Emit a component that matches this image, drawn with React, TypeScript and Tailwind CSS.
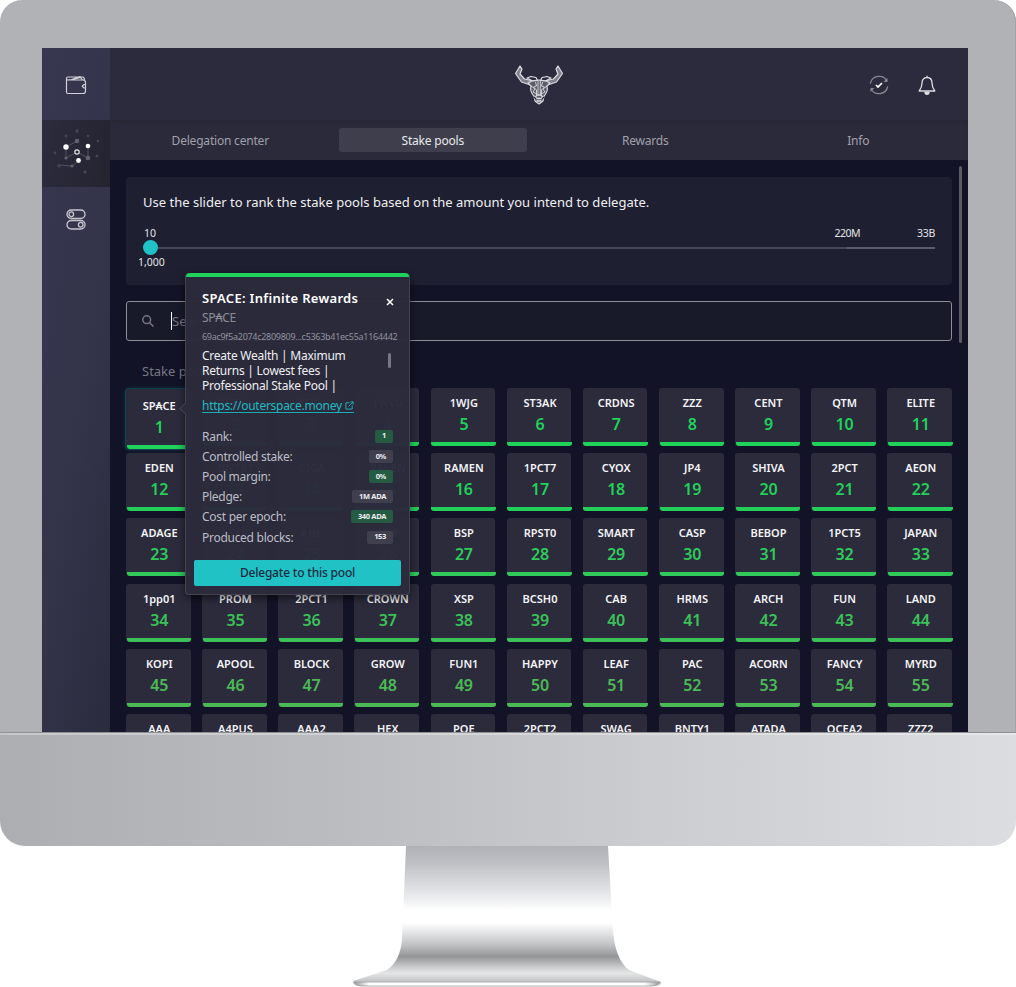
import React from "react";

const rows: string[][] = [
  ["SP₳CE", "OCEAN", "PEGA", "1WVG", "1WJG", "ST3AK", "CRDNS", "ZZZ", "CENT", "QTM", "ELITE"],
  ["EDEN", "UNTRT", "GIGA", "RAVEN", "RAMEN", "1PCT7", "CYOX", "JP4", "SHIVA", "2PCT", "AEON"],
  ["ADAGE", "STAR", "AHL", "TOP", "BSP", "RPST0", "SMART", "CASP", "BEBOP", "1PCT5", "JAPAN"],
  ["1pp01", "PROM", "2PCT1", "CROWN", "XSP", "BCSH0", "CAB", "HRMS", "ARCH", "FUN", "LAND"],
  ["KOPI", "APOOL", "BLOCK", "GROW", "FUN1", "HAPPY", "LEAF", "PAC", "ACORN", "FANCY", "MYRD"],
  ["AAA", "A4PUS", "AAA2", "HEX", "POE", "2PCT2", "SWAG", "BNTY1", "ATADA", "OCEA2", "ZZZ2"],
];
const rankColors = ["#1fd25a", "#24cf59", "#2fca5a", "#3cc158", "#4bb955", "#55b455"];

function Tile({ name, rank, row }: { name: string; rank: number; row: number }) {
  const color = rankColors[row];
  const selected = rank === 1;
  return (
    <div className={selected ? "pt-px" : ""}>
      <div
        className={
          "flex flex-col items-center rounded-[3px] bg-[#2b2b3c] " +
          (selected ? "h-[60px] pt-[2px] shadow-[0_0_0_1px_#12414f,0_0_5px_#12414f]" : "h-[58px]")
        }
      >
        <div className="mt-[6px] ml-[2px] h-[18px] text-[11px] leading-[18px] font-semibold whitespace-nowrap text-[#f4f4f6]">{name}</div>
        <div className="ml-[2px] h-[22px] text-[16px] leading-[24px] font-semibold tracking-[-0.2px]" style={{ color }}>{rank}</div>
        <div className="mt-auto ml-px h-[4px] w-full rounded-b-[3px]" style={{ background: color }} />
      </div>
    </div>
  );
}

function Bull() {
  return (
    <svg className="h-[40px] w-[50px]" viewBox="0 0 50 40" fill="none" stroke="#dcdce2" strokeWidth="1.2" strokeLinejoin="round">
      <path d="M6 1 1.500 8.500l6 8.500 9 3 3-4-9-2L6 9l2-5zM44 1l4.500 7.500-6 8.500-9 3-3-4 9-2L44 9l-2-5z" fill="#80808e" />
      <path d="m13 13 4-1.500 5 1 1.500 3-5 .5zM37 13l-4-1.500-5 1-1.500 3 5 .5z" />
      <path d="M18 16c3 0 5-1 7-1s4 1 7 1l4 2-3 3c1 4-1 8-3 10l-1 5-4 3-4-3-1-5c-2-2-4-6-3-10l-3-3z" fill="#5b5b69" />
      <path d="M24 15v15M26.300 15v15M21.500 17l1 4-3 1 3 3v5M28.500 17l-1 4 3 1-3 3v5M17 21l4 3-2 3 4 2M33 21l-4 3 2 3-4 2" strokeWidth=".9" />
      <path d="m21 32 2.500-2h3l2.500 2-2 1.500h-4zM22.500 36h5" strokeWidth="1.400" />
      <path d="m20 32 2 2M30 32l-2 2" stroke="#262636" />
    </svg>
  );
}

function NetworkIcon() {
  return (
    <svg className="mr-[2px] h-[50px] w-[50px]" viewBox="0 0 50 50" fill="none">
      <path d="m16 19 11-6m-11 6v11l11-6 11 6V18M28 33l-6 5-13-1" stroke="#565664" strokeWidth=".9" />
      <g fill="#444452">
        <circle cx="27" cy="3" r="1.700" /><circle cx="16" cy="8" r="1.400" /><circle cx="38" cy="8" r="1.300" />
        <circle cx="48" cy="13" r="1.200" /><circle cx="5" cy="25" r="1.400" /><circle cx="47" cy="28" r="1.600" />
        <circle cx="9" cy="38" r="1.700" /><circle cx="35" cy="44" r="1.700" />
      </g>
      <g fill="#62626f"><circle cx="27" cy="13" r="2.300" /><circle cx="38" cy="30" r="2.300" /><circle cx="16" cy="30" r="1.600" /><circle cx="22" cy="38" r="1.600" /></g>
      <g fill="#fff"><circle cx="16" cy="19" r="2.700" /><circle cx="38" cy="18" r="2.300" /><circle cx="28.500" cy="32.500" r="2.400" /></g>
      <circle cx="27" cy="24" r="2.200" fill="#292937" stroke="#e4e4e9" strokeWidth="1.200" />
    </svg>
  );
}

function Sidebar() {
  return (
    <aside className="flex w-[68px] shrink-0 flex-col items-center bg-[linear-gradient(100deg,#373850_0%,#33344a_55%,#2a2b3d_100%)]">
      <div className="flex h-[72px] w-full items-center justify-center pt-px">
        <svg className="h-5 w-[22px]" viewBox="0 0 22 20" fill="none" stroke="#d0d0d8" strokeWidth="1.200" strokeLinejoin="round">
          <path d="M3.500 5H18a2.500 2.500 0 0 1 2.500 2.500V16a2.500 2.500 0 0 1-2.500 2.500H3A1.500 1.500 0 0 1 1.500 17V3.500A1.500 1.500 0 0 1 3 2h14.500c1.500 0 2 1 2 3.200M2 5l4.500-.5L15 1.500 17.500 5M7 4.500l9-2M20.500 9.500H19l-1.800 1.700L19 13h1.500" />
        </svg>
      </div>
      <div className="flex h-[67px] w-full items-center justify-center bg-[linear-gradient(100deg,#2b2c3c,#242431)] pb-[2px]"><NetworkIcon /></div>
      <div className="flex h-[65px] w-full items-center justify-center">
        <svg className="h-[21px] w-5" viewBox="0 0 20 21" fill="none" stroke="#c6c6cf" strokeWidth="1.300">
          <rect x="1" y="1" width="18" height="8.500" rx="4.250" /><circle cx="5.300" cy="5.250" r="2.300" />
          <rect x="1" y="11.500" width="18" height="8.500" rx="4.250" /><circle cx="14.700" cy="15.750" r="2.300" />
        </svg>
      </div>
    </aside>
  );
}

function Header() {
  return (
    <header className="bg-[#2b2b3d]">
      <div className="flex h-[72px] items-center">
        <div className="w-[110px] shrink-0" />
        <div className="flex flex-1 justify-center pt-[2px]"><Bull /></div>
        <div className="flex w-[110px] shrink-0 items-center gap-[29px] pt-[2px] pl-[11px]">
          <svg className="h-5 w-5" viewBox="0 0 20 20" fill="none" stroke="#888893" strokeWidth="1.300">
            <path d="M1.300 8.500A9 9 0 0 1 18 6M18.700 11.500A9 9 0 0 1 2 14" />
            <path d="M18.500 3v4h-4zM1.500 17v-4h4z" fill="#888893" stroke="none" />
            <path d="m7 10 2 2 4-4" stroke="#fff" strokeWidth="1.700" />
          </svg>
          <svg className="h-5 w-[18px]" viewBox="0 0 18 20" fill="none" stroke="#dedee4" strokeWidth="1.300" strokeLinejoin="round">
            <path d="M9 .8V2.500M4 8C4 4.500 6 2.500 9 2.500s5 2 5 5.500c0 4 .8 5.500 2.800 8H1.200C3.200 13.500 4 12 4 8z" />
            <path d="M7 17.300a2 2 0 0 0 4 0z" fill="#dedee4" />
          </svg>
        </div>
      </div>
      <nav className="grid h-10 grid-cols-4 items-center gap-[24px] bg-[#2a2a3a] px-4 text-center text-[12px] tracking-[-0.2px] text-[#a0a0aa] shadow-[inset_0_2px_3px_#282835]">
        <span className="pt-px">Delegation center</span>
        <span className="rounded-[3px] bg-[#3e3e4c] pt-1 pb-[2px] text-[#e9e9ed]">Stake pools</span>
        <span className="pt-px">Rewards</span>
        <span className="pt-px pl-px">Info</span>
      </nav>
    </header>
  );
}

function RankSlider() {
  return (
    <section className="h-[108px] rounded bg-[#1e1f30] px-[17px] pt-4">
      <p className="h-[18px] text-[13px] leading-[18px] tracking-[0.01px] whitespace-nowrap text-[#f0f0f3]">Use the slider to rank the stake pools based on the amount you intend to delegate.</p>
      <div className="mt-[13px] flex h-[18px] text-[10.5px] leading-[18px] text-[#e4e4e9]">
        <span className="pl-[1px]">10</span><span className="ml-auto pr-[57px] tracking-[-0.5px]">220M</span><span className="tracking-[-0.3px]">33B</span>
      </div>
      <div className="flex h-[11px] items-center">
        <div className="h-[15px] w-[15px] shrink-0 rounded-full bg-[#20c2c7]" />
        <div className="h-[2px] flex-1 bg-[#464755]" />
        <div className="h-[2px] w-[88px] bg-[#5c5d6b]" />
      </div>
      <div className="-ml-[5px] text-[10.5px] leading-[18px] text-[#e4e4e9]">1,000</div>
    </section>
  );
}

const stats: [string, string, boolean][] = [
  ["Rank:", "1", true],
  ["Controlled stake:", "0%", false],
  ["Pool margin:", "0%", true],
  ["Pledge:", "1M ADA", false],
  ["Cost per epoch:", "340 ADA", true],
  ["Produced blocks:", "153", false],
];

function PoolPopup() {
  return (
    <div className="absolute top-[225px] left-[143px] h-[322px] w-[225px] rounded border border-t-0 border-[#41414f] bg-[#2b2b3c]/98 shadow-[0_3px_8px_#0008]">
      <div className="absolute top-[131px] -left-[5px] h-[9px] w-[9px] rotate-45 border-b border-l border-[#41414f] bg-[#2b2b3c]" />
      <div className="h-[4px] rounded-t bg-[#1fd25a]" />
      <div className="px-4 pt-[11px]">
        <div className="flex h-[20px] items-center justify-between">
          <h2 className="text-[13px] leading-[18px] font-semibold tracking-[0.3px] whitespace-nowrap text-white">SPACE: Infinite Rewards</h2>
          <svg className="mt-[8px] mr-[-1px] h-2 w-2" viewBox="0 0 8 8" stroke="#fff" strokeWidth="1.500"><path d="m1 1 6 6M7 1 1 7" /></svg>
        </div>
        <div className="mt-px h-[18px] text-[12px] leading-[18px] tracking-[-0.3px] text-[#8c8c97]">SP₳CE</div>
        <div className="h-[19px] w-[198px] text-[9px] leading-[19px] tracking-[-0.29px] whitespace-nowrap text-[#92929c]">69ac9f5a2074c2809809...c5363b41ec55a1164442</div>
        <div className="flex h-[49px] justify-between pt-[1.5px] text-[12px] leading-[15.200px] tracking-[-0.24px] text-[#efeff2]">
          <p className="whitespace-nowrap">Create Wealth | Maximum<br />Returns | Lowest fees |<br />Professional Stake Pool |</p>
          <div className="mt-[5px] mr-[2px] h-[15px] w-[3px] rounded bg-[#777783]" />
        </div>
        <div className="mt-[3px] flex h-[15px] w-[152px] items-center justify-between border-b border-[#1da9b1] text-[12px] leading-[15px] tracking-[-0.27px] text-[#1fbac1]">
          <span>https://outerspace.money</span>
          <svg className="h-[9px] w-[9px] shrink-0" viewBox="0 0 10 10" fill="none" stroke="currentColor"><path d="M5 2H1v7h7V5M6 1h3v3M9 1 4 6" /></svg>
        </div>
        <dl className="mt-[13px] text-[12px] tracking-[-0.28px] text-[#bdbdc5]">
          {stats.map(([label, value, good]) => (
            <div key={label} className="flex h-[20.200px] items-center justify-between">
              <dt className="pt-px">{label}</dt>
              <dd className={"flex h-[13px] items-center rounded-[2px] px-[7px] text-[7.500px] font-bold tracking-[-0.35px] text-[#ececef] " + (good ? "bg-[#245b42]" : "bg-[#3f3f4e]")}>{value}</dd>
            </div>
          ))}
        </dl>
      </div>
      <button className="mt-[13px] ml-[8px] block h-[26px] w-[207px] rounded-[2px] bg-[#20c2c6] text-[12px] leading-[26px] font-medium tracking-[-0.2px] text-[#182b40]">Delegate to this pool</button>
    </div>
  );
}

export default function App() {
  return (
    <div className="h-[987px] w-[1016px] overflow-hidden bg-white font-['Noto_Sans','DejaVu_Sans',sans-serif]">
      <div className="h-[732px] rounded-t-[22px] bg-[#b1b2b6] px-[42px] pt-[48px] pr-[48px] shadow-[inset_-1px_0_#a3a4a7]">
        <main className="relative flex h-[684px] w-[926px] overflow-hidden bg-[#121326]">
          <Sidebar />
          <div className="w-[858px] shrink-0">
            <Header />
            <div className="relative px-4 pt-[17px]">
              <div className="absolute top-[6px] right-[6px] h-[177px] w-[3px] rounded bg-[#5b5b68]" />
              <RankSlider />
              <div className="mt-4 flex h-[40px] items-center rounded-[3px] border border-[#8e8e98] bg-[#181929] pl-[15px] text-[13px] text-[#777783]">
                <svg className="mr-[17px] h-3 w-3" viewBox="0 0 12 12" fill="none" stroke="#777783" strokeWidth="1.500"><circle cx="4.700" cy="4.700" r="3.900" /><path d="m7.500 7.500 4 4" /></svg>
                <span className="border-l border-white leading-[18px]">Search</span>
              </div>
              <h1 className="mt-[19px] ml-4 h-[22px] text-[13px] leading-[22px] text-[#777783]">Stake pools (1000)</h1>
              <div className="mt-[6px] flex flex-col gap-[7.200px]">
                {rows.map((row, r) => (
                  <div key={r} className="grid h-[58px] grid-cols-11 gap-[11.600px]">
                    {row.map((name, i) => <Tile key={name} name={name} rank={r * 11 + i + 1} row={r} />)}
                  </div>
                ))}
              </div>
            </div>
          </div>
          <PoolPopup />
        </main>
      </div>
      <div className="h-[114px] rounded-b-[25px] border-t border-[#8f9093] bg-[linear-gradient(90deg,#adaeb1,#bbbcc0_33%,#cccdd0_65%,#dcdde1)] shadow-[inset_0_2px_#ffffff50]" />
      <div className="flex justify-center">
        <svg className="-ml-[2px] h-[141px] w-[310px]" viewBox="0 0 310 141">
          <defs>
            <linearGradient id="metal" x1="0" y1="0" x2="0" y2="1">
              <stop offset="0" stopColor="#b1b2b7" /><stop offset=".12" stopColor="#bfc0c5" /><stop offset=".35" stopColor="#e7e8ea" />
              <stop offset=".46" stopColor="#fff" /><stop offset=".55" stopColor="#fff" /><stop offset=".7" stopColor="#c3c5c7" />
              <stop offset=".79" stopColor="#929496" /><stop offset=".86" stopColor="#c6c8ca" /><stop offset=".91" stopColor="#e4e6e6" /><stop offset=".96" stopColor="#c5c7c9" /><stop offset="1" stopColor="#d9dada" />
            </linearGradient>
            <linearGradient id="foot" x1="0" y1="0" x2="1" y2="0"><stop stopColor="#999" /><stop offset=".05" stopColor="#fff" /><stop offset=".95" stopColor="#fff" /><stop offset="1" stopColor="#999" /></linearGradient>
          </defs>
          <path d="M54 0h202l5 86c2 19 7 31 16 38l32 12c1 3-3 4-7 4H8c-4 0-8-2-7-5l34-11c9-6 14-17 15-31z" fill="url(#metal)" />
          <path d="M2 136h306c-1 3-5 4-10 4H12c-6 0-9-1-10-4z" fill="url(#foot)" stroke="#98999b" strokeWidth=".8" />
        </svg>
      </div>
    </div>
  );
}
